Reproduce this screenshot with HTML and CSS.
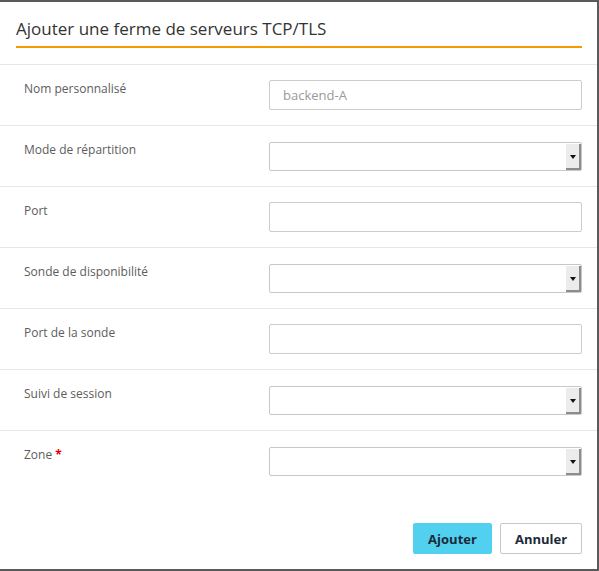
FILE: index.html
```html
<!DOCTYPE html>
<html lang="fr">
<head>
<meta charset="utf-8">
<title>Ajouter une ferme de serveurs TCP/TLS</title>
<link rel="stylesheet" href="styles.css">
</head>
<body>
<div class="dialog">
  <div class="header">
    <h1 class="title">Ajouter une ferme de serveurs TCP/TLS</h1>
  </div>
  <div class="form">
    <div class="row">
      <label class="label">Nom personnalisé</label>
      <div class="field"><div class="input"><span class="placeholder">backend-A</span></div></div>
    </div>
    <div class="row">
      <label class="label">Mode de répartition</label>
      <div class="field"><div class="select"><span class="value"></span><span class="arrow"><span class="tri"></span></span></div></div>
    </div>
    <div class="row">
      <label class="label">Port</label>
      <div class="field"><div class="input"></div></div>
    </div>
    <div class="row">
      <label class="label">Sonde de disponibilité</label>
      <div class="field"><div class="select"><span class="value"></span><span class="arrow"><span class="tri"></span></span></div></div>
    </div>
    <div class="row">
      <label class="label">Port de la sonde</label>
      <div class="field"><div class="input"></div></div>
    </div>
    <div class="row">
      <label class="label">Suivi de session</label>
      <div class="field"><div class="select"><span class="value"></span><span class="arrow"><span class="tri"></span></span></div></div>
    </div>
    <div class="row last">
      <label class="label">Zone <span class="req">*</span></label>
      <div class="field"><div class="select"><span class="value"></span><span class="arrow"><span class="tri"></span></span></div></div>
    </div>
  </div>
  <div class="footer">
    <button class="btn primary">Ajouter</button>
    <button class="btn secondary">Annuler</button>
  </div>
</div>
</body>
</html>
```
FILE: styles.css
```css
html, body {
  margin: 0;
  padding: 0;
  background: #ffffff;
}
body {
  font-family: "Open Sans", "Liberation Sans", sans-serif;
}
.dialog {
  box-sizing: border-box;
  width: 599px;
  height: 571px;
  border-top: 2px solid #5a5a5a;
  border-right: 2px solid #5a5a5a;
  border-bottom: 2px solid #5a5a5a;
  background: #fff;
  display: flex;
  flex-direction: column;
}
.header {
  padding: 15px 15px 16px 16px;
}
.title {
  margin: 0;
  font-size: 17px;
  font-weight: 400;
  line-height: 24px;
  color: #333;
  padding-bottom: 5px;
  border-bottom: 2px solid #f79a00;
}
.form {
  border-top: 1px solid #e6e6e6;
}
.row {
  display: flex;
  padding: 15px 15px 15px 24px;
  border-bottom: 1px solid #e6e6e6;
}
.row.last {
  border-bottom: none;
}
.label {
  width: 245px;
  font-size: 12px;
  line-height: 17px;
  color: #5c5c5c;
}
.req {
  color: #e00000;
  font-weight: 700;
}
.field {
  flex: 1;
  height: 30px;
}
.input {
  box-sizing: border-box;
  height: 30px;
  border: 1px solid #cccccc;
  border-radius: 2px;
  display: flex;
  align-items: center;
  padding: 0 13px;
}
.placeholder {
  font-size: 13px;
  color: #9a9a9a;
}
.select {
  box-sizing: border-box;
  height: 29px;
  margin-top: 1px;
  border: 1px solid #c8c8c8;
  border-radius: 2px;
  display: flex;
  padding: 1px 0 0 0;
}
.value {
  flex: 1;
}
.arrow {
  width: 13px;
  background: #ececec;
  box-shadow: inset -2px -2px 0 #8c8c8c;
  display: flex;
  align-items: center;
  justify-content: center;
  padding-right: 2px;
  padding-bottom: 1px;
}
.tri {
  width: 0;
  height: 0;
  border-left: 3px solid transparent;
  border-right: 3px solid transparent;
  border-top: 4px solid #111;
}
.footer {
  margin-top: auto;
  display: flex;
  justify-content: flex-end;
  gap: 8px;
  padding: 0 15px 15px 0;
}
.btn {
  box-sizing: border-box;
  height: 31px;
  font-family: "Open Sans", "Liberation Sans", sans-serif;
  font-size: 13px;
  font-weight: 700;
  color: #1c2a38;
  border-radius: 2px;
  cursor: pointer;
}
.btn.primary {
  width: 79px;
  background: #52d0f0;
  border: 1px solid #52d0f0;
}
.btn.secondary {
  width: 82px;
  background: #fff;
  border: 1px solid #c8c8c8;
}
```
